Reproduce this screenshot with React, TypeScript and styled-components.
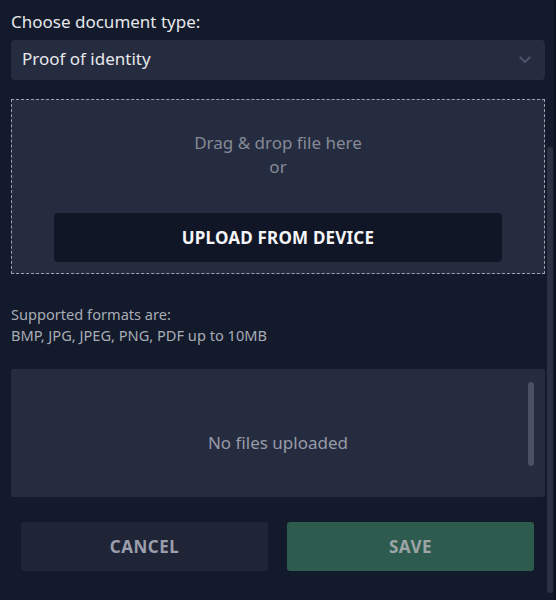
import React from 'react';
import styled, { createGlobalStyle } from 'styled-components';

const GlobalStyle = createGlobalStyle`
  * {
    box-sizing: border-box;
  }
  html, body {
    margin: 0;
    padding: 0;
    background: #131a2b;
    font-family: "Noto Sans", "Open Sans", sans-serif;
  }
`;

const Page = styled.div`
  position: relative;
  width: 556px;
  height: 600px;
  padding: 11px 11px 0 11px;
  background: #131a2b;
  overflow: hidden;
`;

const Label = styled.div`
  font-size: 17px;
  line-height: 22px;
  color: #e6e8ec;
  margin-bottom: 7px;
`;

const Select = styled.div`
  height: 40px;
  border-radius: 4px;
  background: #262c40;
  display: flex;
  align-items: center;
  justify-content: space-between;
  padding: 0 14px 3px 11px;
  font-size: 17px;
  color: #e6e8ec;

  svg {
    margin-top: 3px;
  }
`;

const DropZone = styled.div`
  margin-top: 19px;
  height: 175px;
  border: 1.5px dashed #9ea2ac;
  background: #262c40;
  display: flex;
  flex-direction: column;
  align-items: center;
  padding: 31px 42px 0 42px;
`;

const DropText = styled.div`
  font-size: 17px;
  line-height: 24px;
  color: #858a97;
  text-align: center;
`;

const UploadButton = styled.button`
  margin-top: 34px;
  width: 100%;
  height: 49px;
  border: none;
  border-radius: 4px;
  background: #111626;
  color: #f4f5f7;
  font-family: inherit;
  font-size: 17px;
  font-weight: 700;
  letter-spacing: 0.2px;
  cursor: pointer;
`;

const Formats = styled.div`
  margin-top: 30px;
  font-size: 14.6px;
  line-height: 21px;
  color: #a8acb5;
`;

const FilesBox = styled.div`
  position: relative;
  margin-top: 23px;
  height: 128px;
  border-radius: 2px;
  background: #262c40;
  display: flex;
  align-items: center;
  justify-content: center;
  padding-top: 18px;
  font-size: 17px;
  color: #979ba7;
`;

const InnerThumb = styled.div`
  position: absolute;
  right: 11px;
  top: 13px;
  width: 6px;
  height: 84px;
  border-radius: 3px;
  background: #4a5164;
`;

const Actions = styled.div`
  margin-top: 25px;
  display: grid;
  grid-template-columns: 1fr 1fr;
  gap: 19px;
  padding: 0 11px 0 10px;
`;

const ActionButton = styled.button<{ $primary?: boolean }>`
  height: 49px;
  border: none;
  border-radius: 3px;
  background: ${p => (p.$primary ? '#2d5b4d' : '#1f2537')};
  color: ${p => (p.$primary ? '#9ca5a7' : '#9a9fab')};
  font-family: inherit;
  font-size: 17px;
  font-weight: 700;
  letter-spacing: 0.5px;
  cursor: pointer;
`;

const ScrollTrack = styled.div`
  position: absolute;
  top: 0;
  right: 0;
  width: 10px;
  height: 600px;
  background: #131a2b;
  border-right: 2px solid #0e1321;
`;

const ScrollThumb = styled.div`
  position: absolute;
  top: 147px;
  left: 1px;
  width: 6px;
  height: 446px;
  border-radius: 3px;
  background: #2a3143;
`;

function Chevron() {
  return (
    <svg width="12" height="8" viewBox="0 0 12 8" fill="none">
      <path d="M1.5 1.5L6 6L10.5 1.5" stroke="#4a5166" strokeWidth="2.4" strokeLinecap="round" strokeLinejoin="round" />
    </svg>
  );
}

function App() {
  return (
    <>
      <GlobalStyle />
      <Page>
        <Label>Choose document type:</Label>
        <Select>
          <span>Proof of identity</span>
          <Chevron />
        </Select>
        <DropZone>
          <DropText>Drag &amp; drop file here</DropText>
          <DropText>or</DropText>
          <UploadButton>UPLOAD FROM DEVICE</UploadButton>
        </DropZone>
        <Formats>
          Supported formats are:
          <br />
          BMP, JPG, JPEG, PNG, PDF up to 10MB
        </Formats>
        <FilesBox>
          No files uploaded
          <InnerThumb />
        </FilesBox>
        <Actions>
          <ActionButton>CANCEL</ActionButton>
          <ActionButton $primary>SAVE</ActionButton>
        </Actions>
        <ScrollTrack>
          <ScrollThumb />
        </ScrollTrack>
      </Page>
    </>
  );
}

export default App;
